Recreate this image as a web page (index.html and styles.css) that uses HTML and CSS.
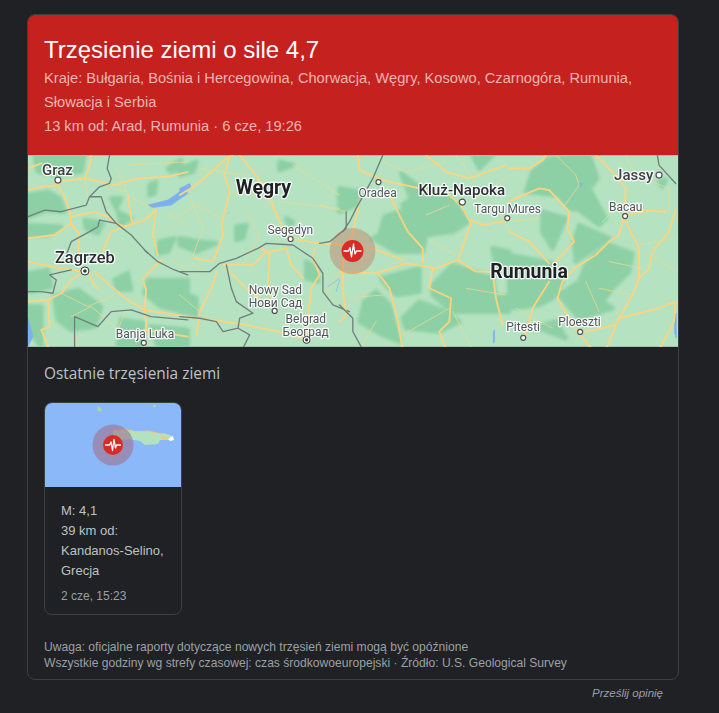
FILE: index.html
```html
<!DOCTYPE html>
<html lang="pl">
<head>
<meta charset="utf-8">
<title>Trzęsienie ziemi</title>
<link rel="stylesheet" href="styles.css">
</head>
<body>
<main class="page">
  <section class="card">
    <header class="head">
      <h1 class="title">Trzęsienie ziemi o sile 4,7</h1>
      <p class="sub">Kraje: Bułgaria, Bośnia i Hercegowina, Chorwacja, Węgry, Kosowo, Czarnogóra, Rumunia, Słowacja i Serbia</p>
      <p class="sub">13 km od: Arad, Rumunia · 6 cze, 19:26</p>
    </header>
    <svg class="map" viewBox="0 0 651 192" xmlns="http://www.w3.org/2000/svg">
      <rect width="651" height="192" fill="#b5e3c2"/>
      <g class="forests">
        <g transform="scale(.33333)" class="forest">
          <path d="M0 120L60 110 95 130 110 170 60 165 0 185Z"/>
          <path d="M20 0H170L160 50 90 60 30 50Z"/>
          <path d="M420 40L460 15 455 40 430 50Z"/>
          <path d="M365 90L385 80 380 115 365 120Z"/>
          <path d="M250 130L280 130 265 160Z"/>
          <path d="M170 195L225 205 210 235 175 220Z"/>
          <path d="M270 170L310 190 280 210Z"/>
          <path d="M0 210L100 215 60 240 0 240Z"/>
          <path d="M395 260L440 250 420 290 390 295Z"/>
        </g>
        <g transform="translate(0,95) scale(.33333)" class="forest">
          <path d="M0 70L60 60 70 110 30 120 0 125Z"/>
          <path d="M80 140L150 120 220 170 200 230 130 240 90 210Z"/>
          <path d="M260 90L300 70 310 120 270 120Z"/>
          <path d="M360 90L480 90 480 190 400 170 350 130Z"/>
          <path d="M280 210L350 220 340 290 270 290Z"/>
          <path d="M0 170L40 170 40 290 10 250Z"/>
          <path d="M370 230L480 240 480 290 390 290Z"/>
        </g>
        <g transform="translate(152,0) scale(.33333)" class="forest">
          <path d="M0 40L50 20 40 50 0 60Z"/>
          <path d="M170 215L200 210 190 250 170 255Z"/>
          <path d="M0 250L60 260 110 265 50 290 0 270Z"/>
          <path d="M0 410L50 430 50 480 0 470Z"/>
          <path d="M380 320L410 340 415 380 380 370Z"/>
          <path d="M300 20L340 30 300 45Z"/>
          <path d="M320 190L340 200 330 215Z"/>
        </g>
        <g transform="translate(312,0) scale(.33333)" class="forest">
          <path d="M185 55L240 95 290 110 335 130 350 150 385 200 340 230 260 240 250 290 210 230 190 150 215 130Z"/>
          <path d="M135 185L180 170 210 240 250 290 170 290 100 250 120 240Z"/>
          <path d="M125 370L240 340 240 410 170 420 140 390Z"/>
          <path d="M280 390L340 330 460 370 470 430 510 420 510 470 340 470 280 420Z"/>
          <path d="M75 440L110 410 150 450 180 560 130 540 60 500Z"/>
          <path d="M190 490L240 440 320 470 360 500 300 530 200 520Z"/>
          <path d="M0 100L60 110 50 150 0 170Z"/>
          <path d="M400 0H460L420 40Z"/>
          <path d="M460 280L510 290 510 340 470 330Z"/>
        </g>
        <g transform="translate(482,0) scale(.33333)" class="forest">
          <path d="M50 110L70 50 120 10 240 0 265 70 240 100 290 190 270 210 210 165 180 160 150 120Z"/>
          <path d="M100 170L170 190 130 280 100 230Z"/>
          <path d="M210 210L300 250 200 320 195 260Z"/>
          <path d="M260 300L300 270 370 295 360 350 310 400 280 440 310 460 210 490 150 420 210 380 230 330Z"/>
          <path d="M0 300L130 325 160 380 130 430 90 450 0 460Z"/>
          <path d="M450 80L470 75 460 95Z"/>
          <path d="M70 520L140 500 170 550 90 520Z"/>
        </g>
      </g>
      <g class="tile" transform="scale(.33333)">
        <path class="water" d="M360 150L420 135 470 100 480 115 430 150 370 158Z"/>
        <g class="road">
          <path d="M0 105L40 95 90 90 110 125 125 170 130 205 155 240 150 300"/>
          <path d="M90 80L170 70 185 30 190 0"/>
          <path d="M170 70L260 90 330 70 420 65 480 50"/>
          <path d="M130 185L200 170 240 185 265 205 290 215 350 195 385 165 375 240 390 300"/>
          <path d="M300 120L310 190 315 205M290 215L250 230 225 290M130 205L80 240 0 250M0 40L40 25"/>
        </g>
        <path class="minor" d="M265 40L300 120 385 165M300 30L480 20M170 70L180 130M240 100L300 110M410 170L480 210"/>
        <path class="border" d="M245 0L238 40 250 70 245 85 215 95 185 125 175 150 100 170 50 165 0 185M185 125L220 125 235 170 265 205 310 240 360 295M265 205L215 195 210 215 185 230 130 260 115 300"/>
      </g>
      <g class="tile" transform="translate(0,95) scale(.33333)">
        <path class="water" d="M0 205L15 260 0 290Z"/>
        <g class="road">
          <path d="M0 35L70 50 165 65 130 90 100 130 60 150 0 155M60 150L65 230 40 240 60 290"/>
          <path d="M185 70L195 100 210 115M200 65L250 110 300 150 350 180 480 200"/>
          <path d="M345 90L355 120 350 180 355 220 350 290M400 30L360 70 345 90M480 260L350 240"/>
        </g>
        <path class="minor" d="M100 130L180 170 270 130M130 200L190 170 260 230M270 240L290 190M140 230L150 290M430 30L480 60"/>
        <path class="border" d="M350 0L390 35 440 60 480 75M0 125L40 125 75 130 85 90 65 75 130 60M140 290L140 200 210 230 250 185 310 180 370 200 480 210"/>
      </g>
      <g class="tile" transform="translate(152,0) scale(.33333)">
        <path class="water" d="M0 100L30 85 35 100 0 120Z"/>
        <g class="road">
          <path d="M150 0L135 60 150 110 125 210 130 240 100 320 45 310"/>
          <path d="M0 120L40 95 90 55 140 10 160 0"/>
          <path d="M180 0L260 100 300 200 330 250 420 265 500 270"/>
          <path d="M110 350L100 390 60 470 50 540"/>
          <path d="M0 485L60 490 200 510 320 535 380 555"/>
          <path d="M245 280L270 295 265 380 280 460M270 290L320 280 335 330 370 370"/>
          <path d="M130 330L220 330 260 290M405 280L400 310 420 360 395 400 385 490 380 555M285 465L200 400 140 340"/>
        </g>
        <path class="minor" d="M0 180L50 150 130 190M30 130L70 220 40 300M150 110L260 130 300 200M200 170L240 240 190 330M300 140L480 160M60 40L200 60M20 310L70 350M420 150L500 170M340 30L480 120M480 350L440 420 510 470M0 420L60 470"/>
        <path class="blue" d="M445 395L480 370M480 375L470 410M145 175L150 170"/>
        <path class="border" d="M0 350L90 350 120 325 170 310 235 280 260 265 340 270 400 310 430 355 430 410 460 450 510 470M140 330L155 400 170 440 220 475 180 490 175 520 210 540 190 580M0 485L60 490 110 500 130 530 175 520M500 170L500 220 450 260 420 265"/>
      </g>
      <g class="tile" transform="translate(312,0) scale(.33333)">
        <path class="water" d="M462 530L466 525 466 560 462 565Z"/>
        <g class="road">
          <path d="M0 350L110 355 200 325 290 340 355 315 410 350 450 350"/>
          <path d="M355 315L395 205 365 150 330 120 240 100 130 75 60 45 55 0"/>
          <path d="M395 195L430 210 510 195M120 360L150 400 175 500 190 585M60 140L40 230 10 320 10 400 20 480 0 500"/>
          <path d="M155 130L205 230 250 280 250 320M280 340L270 400 335 430 330 500 300 530 320 585M460 350L470 430 490 510M100 280L190 315M260 0L320 50 390 70 500 30"/>
        </g>
        <path class="minor" d="M130 20L200 50 320 20M0 300L100 280M20 430L130 420M350 0L410 80M410 130L500 70M260 180L330 150M280 260L350 300M380 400L500 420M190 540L330 460M340 470L400 585M60 580L110 500M480 170L510 230"/>
        <path class="border" d="M130 0L100 70 50 160 30 200 10 230M0 450L40 490 40 530 70 585"/>
      </g>
      <g class="tile" transform="translate(482,0) scale(.33333)">
        <path class="water" d="M497 490L502 475 502 550 497 535Z"/>
        <path class="water" d="M210 85L220 85 215 95Z"/>
        <g class="road">
          <path d="M260 0L310 50 350 100 345 180 330 240 300 260 260 300 195 340 160 380"/>
          <path d="M345 190L390 280 390 370 370 420 330 490 320 510 230 530 210 530"/>
          <path d="M130 330L195 260 175 220 180 170 120 105 90 100 20 130 0 140"/>
          <path d="M0 40L60 40 100 15 110 0M160 380L145 430 205 530 250 585M120 380L70 460 50 540"/>
          <path d="M500 165L480 230 430 290 420 340 390 370M330 490L290 585M330 490L450 460 500 440 495 500 450 585M0 230L60 260 120 325M400 165L470 170M400 170L345 180"/>
        </g>
        <path class="minor" d="M350 0L380 60 480 100 480 170M140 0L200 60 210 90 160 160M0 200L90 190M230 380L270 470M300 320L400 340M390 270L500 250M270 400L370 420M20 460L130 520M360 120L280 200M430 300L500 350"/>
        <path class="border" d="M445 0L450 30 500 85"/>
      </g>
      <g class="quake">
        <circle class="halo" cx="325" cy="96" r="23"/>
        <circle cx="325" cy="96" r="11" fill="#d92a26"/>
        <path class="pulse" d="M316 96H321L322.500 92.500 324 102 326 89 327.500 99 329 96H334"/>
      </g>
      <g class="labels">
        <text class="lb l-m" x="14" y="20">Graz</text>
        <text class="lb l-b" x="208" y="39">Węgry</text>
        <text class="lb l-s" x="240" y="79">Segedyn</text>
        <text class="lb l-l" x="27" y="108">Zagrzeb</text>
        <text class="lb l-s" x="221" y="139">Nowy Sad</text>
        <text class="lb l-s" x="221" y="152">Нови Сад</text>
        <text class="lb l-s" x="258" y="168">Belgrad</text>
        <text class="lb l-s" x="255" y="181">Београд</text>
        <text class="lb l-s" x="88" y="183">Banja Luka</text>
        <text class="lb l-s" x="331" y="42">Oradea</text>
        <text class="lb l-m2" x="391" y="40">Kluż-Napoka</text>
        <text class="lb l-s" x="447" y="58">Targu Mures</text>
        <text class="lb l-b" x="463" y="123">Rumunia</text>
        <text class="lb l-m" x="587" y="25">Jassy</text>
        <text class="lb l-s" x="582" y="56">Bacau</text>
        <text class="lb l-s" x="479" y="176">Pitesti</text>
        <text class="lb l-s" x="531" y="171">Ploeszti</text>
      </g>
      <g class="dots">
        <circle cx="30" cy="25" r="3"/>
        <circle cx="263" cy="84" r="2.500"/>
        <circle cx="247" cy="156" r="2.500"/>
        <circle cx="116" cy="188" r="2.500"/>
        <circle cx="351" cy="27" r="2.500"/>
        <circle cx="435" cy="47" r="3"/>
        <circle cx="480" cy="63" r="2.500"/>
        <circle cx="632" cy="20" r="3"/>
        <circle cx="598" cy="61" r="2.500"/>
        <circle cx="496" cy="183" r="2.500"/>
        <circle cx="553" cy="177" r="2.500"/>
      </g>
      <g class="caps">
        <circle cx="57" cy="116" r="4"/>
        <circle cx="279" cy="185" r="3.500"/>
      </g>
      <circle cx="57" cy="116" r="1.800" fill="#333"/>
      <circle cx="279" cy="185" r="1.600" fill="#333"/>
    </svg>
    <div class="body">
      <h2 class="recent">Ostatnie trzęsienia ziemi</h2>
      <article class="item">
        <svg class="thumb" viewBox="0 0 136 84" xmlns="http://www.w3.org/2000/svg">
          <rect width="136" height="84" fill="#8ab8f8"/>
          <path d="M52 3L56 5 57 9 53 8Z" fill="#a9d6a8"/>
          <path d="M108 2H111V4H108Z" fill="#a9d6a8"/>
          <path d="M68 27L80 26 90 28 103 28 116 31 118 30 128 33 125 37 115 37 113 41 100 42 95 38 83 36 75 37 68 34Z" fill="#b3e2c0"/>
          <path class="tr" d="M68 28L79 27 90 29 103 28 116 31 118 36 125 35"/>
          <path d="M123 36L128 33 129 37 125 38Z" fill="#fff"/>
          <circle cx="68" cy="42" r="20.500" fill="#a0728e" opacity=".6"/>
          <circle cx="68" cy="42" r="10" fill="#d92a26"/>
          <path class="pulse" d="M60 42H64.500L66 39 67.500 47.500 69 36.500 70.500 45 71.500 42H76"/>
        </svg>
        <div class="item-body">
          <p class="item-text">M: 4,1<br>39 km od:<br>Kandanos-Selino,<br>Grecja</p>
          <p class="item-date">2 cze, 15:23</p>
        </div>
      </article>
      <footer class="notes">
        <p>Uwaga: oficjalne raporty dotyczące nowych trzęsień ziemi mogą być opóźnione</p>
        <p>Wszystkie godziny wg strefy czasowej: czas środkowoeuropejski · Źródło: U.S. Geological Survey</p>
      </footer>
    </div>
  </section>
  <div class="feedback">Prześlij opinię</div>
</main>
</body>
</html>
```
FILE: styles.css
```css
* { box-sizing: border-box; }
html, body { margin: 0; height: 100%; }
body {
  background: #202124;
  font-family: "Liberation Sans", Arial, sans-serif;
  color: #bdc1c6;
  overflow: hidden;
}
.page { padding: 14px 40px 0 27px; }
.card {
  width: 652px;
  height: 666px;
  border: 1px solid #3c4043;
  border-radius: 8px;
  overflow: hidden;
  display: flex;
  flex-direction: column;
}
.head {
  background: #c5221f;
  height: 140px;
  padding: 20px 16px 0;
  flex: none;
}
.title {
  margin: 0 0 1px;
  font-size: 24px;
  line-height: 30px;
  font-weight: 400;
  color: #fff;
}
.sub {
  margin: 0;
  font-size: 14.65px;
  line-height: 24px;
  color: #efb4b1;
}
.map { display: block; width: 650px; height: 192px; flex: none; filter: blur(.35px); }
.forests { filter: blur(1.6px); }
.forest path {
  fill: #8dd0a5;
  stroke: #8dd0a5;
  stroke-width: 14;
  stroke-linejoin: round;
}
.water { fill: #7db1ee; stroke: #7db1ee; stroke-width: 2; stroke-linejoin: round; }
.blue { fill: none; stroke: #8fc0ee; stroke-width: 3; }
.road path {
  fill: none;
  stroke: #fcd47f;
  stroke-width: 5.5;
  stroke-linecap: round;
  stroke-linejoin: round;
}
.minor {
  fill: none;
  stroke: #e6da92;
  stroke-width: 2.5;
  stroke-linecap: round;
  stroke-linejoin: round;
}
.border {
  fill: none;
  stroke: #717f7c;
  stroke-width: 4;
  stroke-linecap: round;
  stroke-linejoin: round;
}
.halo { fill: #c86a50; opacity: .38; }
.lb {
  font-family: Roboto, sans-serif;
  fill: #3c4043;
  stroke: #fff;
  stroke-width: 2.5px;
  stroke-opacity: .9;
  paint-order: stroke;
  stroke-linejoin: round;
}
.l-s { font-size: 12px; fill: #50555a; }
.l-m { font-size: 15px; font-weight: 500; }
.l-m2 { font-size: 15.2px; font-weight: 500; fill: #2b2f33; }
.l-l { font-size: 16.4px; font-weight: 500; fill: #2b2f33; }
.l-b { font-size: 19.5px; font-weight: 700; fill: #202124; }
.dots circle { fill: #fff; stroke: #4d5156; stroke-width: 1.2; }
.caps circle { fill: #fff; stroke: #333; stroke-width: 1; }
.pulse { fill: none; stroke: #fff; stroke-width: 1.3; stroke-linejoin: round; }
.tr { fill: none; stroke: #fbc56d; stroke-width: 1.2; }
.body { padding: 17px 16px 0; flex: 1; display: flex; flex-direction: column; }
.recent {
  margin: 0 0 18px;
  font-family: "Open Sans", sans-serif;
  font-size: 15.4px;
  line-height: 20px;
  font-weight: 500;
  color: #bdc1c6;
}
.item {
  width: 138px;
  height: 213px;
  border: 1px solid #3c4043;
  border-radius: 8px;
  overflow: hidden;
}
.thumb { display: block; width: 136px; height: 84px; }
.item-body { padding: 14px 16px 0; }
.item-text {
  margin: 0 0 5px;
  font-size: 13px;
  line-height: 20px;
  white-space: nowrap;
  color: #bdc1c6;
}
.item-date {
  margin: 0;
  font-size: 12px;
  line-height: 20px;
  color: #9aa0a6;
}
.notes { margin-top: 24px; font-size: 12.1px; line-height: 16px; color: #9aa0a6; }
.notes p { margin: 0; }
.feedback {
  width: 636px;
  margin-top: 5px;
  text-align: right;
  font-size: 11.5px;
  line-height: 16px;
  font-style: italic;
  color: #9aa0a6;
}
```
